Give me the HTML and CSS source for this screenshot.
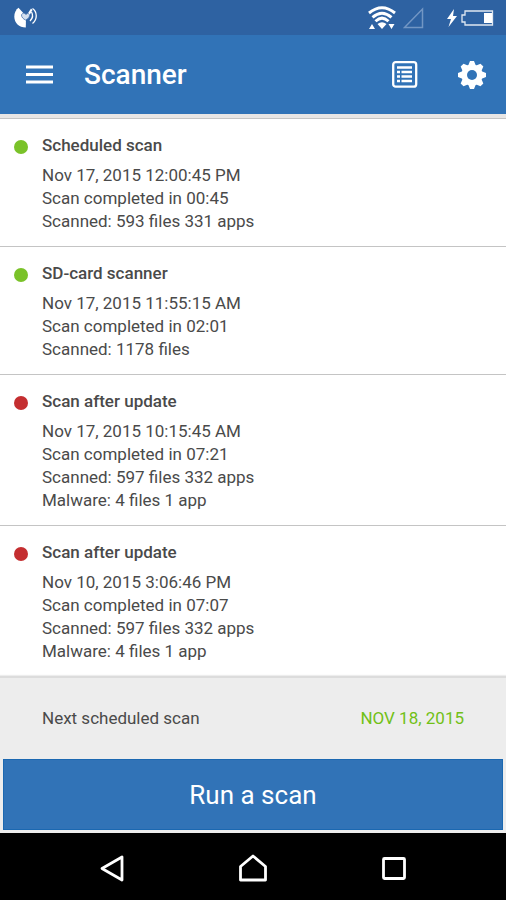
FILE: index.html
```html
<!DOCTYPE html>
<html lang="en">
<head>
<meta charset="utf-8">
<meta name="viewport" content="width=device-width, initial-scale=1">
<title>Scanner</title>
<link rel="stylesheet" href="styles.css">
</head>
<body>
<div class="screen">
  <div class="status-bar">
    <svg class="status-app" width="24" height="22" viewBox="0 0 24 22" aria-hidden="true">
      <path d="M4.500 .8 L12 9 L11.800 20.500 C5 20.500 .3 16 .3 9.500 C.3 6 2 2.500 4.500 .8Z" fill="#fff"/>
      <path d="M12.500 8.500 L17 1.500 L18.500 3 L15 9Z" fill="#fff"/>
      <path d="M7.500 8 C8 6 10.500 5.500 12 7.500 C13.500 5.500 15.500 6.500 15.500 8.500 C15.500 11 13.500 12 11.500 13 C9.500 12 7.500 10.500 7.500 8Z" fill="#d5e0ee" stroke="#4a76b0" stroke-width=".8"/>
      <path d="M17.500 5 C19.300 8 18.500 11.500 16 14" fill="none" stroke="#fff" stroke-width="1.300"/>
      <path d="M18.500 1.500 C23.500 5 23.500 12.500 18.500 16.500" fill="none" stroke="#fff" stroke-width="1.300"/>
    </svg>
    <div class="status-icons">
      <svg width="28" height="24" viewBox="0 0 28 24" aria-hidden="true">
        <g fill="none" stroke="#fff" stroke-width="2.900">
          <path d="M1 7 Q14 -3.500 27 7"/>
          <path d="M4.500 11.300 Q14 3 23.500 11.300"/>
          <path d="M7.500 15.300 Q14 9 20.500 15.300"/>
        </g>
        <path d="M9.500 18 Q14 14.500 18.500 18 L14 23Z M1 23 L4 18 L7 23Z M20.500 18 H26.500 L23.500 23Z" fill="#fff"/>
      </svg>
      <svg class="signal" width="21" height="22" viewBox="0 0 21 22" aria-hidden="true">
        <path d="M1.500 20.500 H19.500 V2Z" fill="none" stroke="#7296c4" stroke-width="1.500"/>
      </svg>
      <svg class="bolt" width="12" height="18" viewBox="0 0 12 18" aria-hidden="true">
        <path d="M8 0 L1 10 H5 L2.500 18 L11 7 H7Z" fill="#fff"/>
      </svg>
      <svg width="33" height="16" viewBox="0 0 33 16" aria-hidden="true">
        <path d="M4 1 H31.500 V15 H4 V12 H1 V5 H4Z" fill="none" stroke="#fff" stroke-opacity=".85" stroke-width="1.300"/>
        <path d="M23 3 H31 V13 H23Z" fill="#fff"/>
      </svg>
    </div>
  </div>

  <header class="app-bar">
    <button class="icon-button" type="button" aria-label="Menu">
      <svg width="28" height="28" viewBox="0 0 28 28" aria-hidden="true">
        <path d="M0 6 H27 M0 13.500 H27 M0 21 H27" stroke="#fff" stroke-width="2.800"/>
      </svg>
    </button>
    <h1 class="app-title">Scanner</h1>
    <button class="icon-button log-button" type="button" aria-label="Scan log">
      <svg width="26" height="28" viewBox="0 0 26 28" aria-hidden="true">
        <rect x="1.200" y="1.200" width="23" height="24.500" rx="2.500" fill="none" stroke="#fff" stroke-width="2.300"/>
        <path d="M5 6.500 H20 M9.500 11 H20 M9.500 15.500 H20 M9.500 20 H20" stroke="#fff" stroke-width="2.300"/>
        <path d="M5 11 H8 M5 15.500 H8 M5 20 H8" stroke="#fff" stroke-width="2.500"/>
      </svg>
    </button>
    <button class="icon-button" type="button" aria-label="Settings">
      <svg width="28" height="28" viewBox="0 0 28 28" aria-hidden="true">
        <g fill="#fff">
          <path d="M12 0 H16 L18 5 V23 L16 28 H12 L10 23 V5Z"/>
          <path d="M12 0 H16 L18 5 V23 L16 28 H12 L10 23 V5Z" transform="rotate(45 14 14)"/>
          <path d="M12 0 H16 L18 5 V23 L16 28 H12 L10 23 V5Z" transform="rotate(90 14 14)"/>
          <path d="M12 0 H16 L18 5 V23 L16 28 H12 L10 23 V5Z" transform="rotate(135 14 14)"/>
          <circle cx="14" cy="14" r="10.500"/>
        </g>
        <circle cx="14" cy="14" r="5" fill="#3173b7"/>
      </svg>
    </button>
  </header>

  <main class="log">
    <article class="entry">
      <span class="dot dot-ok"></span>
      <div>
        <h2 class="entry-title">Scheduled scan</h2>
        <p>Nov 17, 2015 12:00:45 PM</p>
        <p>Scan completed in 00:45</p>
        <p>Scanned: 593 files 331 apps</p>
      </div>
    </article>
    <article class="entry">
      <span class="dot dot-ok"></span>
      <div>
        <h2 class="entry-title">SD-card scanner</h2>
        <p>Nov 17, 2015 11:55:15 AM</p>
        <p>Scan completed in 02:01</p>
        <p>Scanned: 1178 files</p>
      </div>
    </article>
    <article class="entry">
      <span class="dot dot-alert"></span>
      <div>
        <h2 class="entry-title">Scan after update</h2>
        <p>Nov 17, 2015 10:15:45 AM</p>
        <p>Scan completed in 07:21</p>
        <p>Scanned: 597 files 332 apps</p>
        <p>Malware: 4 files 1 app</p>
      </div>
    </article>
    <article class="entry">
      <span class="dot dot-alert"></span>
      <div>
        <h2 class="entry-title">Scan after update</h2>
        <p>Nov 10, 2015 3:06:46 PM</p>
        <p>Scan completed in 07:07</p>
        <p>Scanned: 597 files 332 apps</p>
        <p>Malware: 4 files 1 app</p>
      </div>
    </article>
  </main>

  <footer class="actions">
    <div class="next-scan">
      <span>Next scheduled scan</span>
      <a class="next-date" href="#">NOV 18, 2015</a>
    </div>
    <button class="run-button" type="button">Run a scan</button>
  </footer>

  <nav class="nav-bar" aria-label="System">
    <button class="icon-button" type="button" aria-label="Back">
      <svg width="28" height="30" viewBox="0 0 28 30" aria-hidden="true">
        <path d="M4 14.500 L24 3 V26Z" fill="none" stroke="#fff" stroke-width="2.800" stroke-linejoin="round"/>
      </svg>
    </button>
    <button class="icon-button" type="button" aria-label="Home">
      <svg width="28" height="30" viewBox="0 0 28 30" aria-hidden="true">
        <path d="M1.500 26 V12.500 L14 2 L26.500 12.500 V26Z" fill="none" stroke="#fff" stroke-width="2.800" stroke-linejoin="round"/>
      </svg>
    </button>
    <button class="icon-button" type="button" aria-label="Recent apps">
      <svg width="28" height="30" viewBox="0 0 28 30" aria-hidden="true">
        <rect x="3.500" y="4.500" width="21" height="20" rx="1" fill="none" stroke="#fff" stroke-width="2.800"/>
      </svg>
    </button>
  </nav>
</div>
</body>
</html>
```
FILE: styles.css
```css
* {
  box-sizing: border-box;
}

body {
  margin: 0;
  font-family: Roboto, "Liberation Sans", sans-serif;
  font-size: 17px;
  line-height: 23px;
  color: #4a4a4a;
  background: #000;
}

h1,
h2,
p {
  margin: 0;
}

button {
  font: inherit;
  border: 0;
  padding: 0;
  cursor: pointer;
}

svg {
  display: block;
}

.screen {
  display: flex;
  flex-direction: column;
  min-height: 100vh;
  background: #fff;
}

.status-bar {
  display: flex;
  align-items: center;
  justify-content: space-between;
  height: 35px;
  padding: 0 12px 0 14px;
  background: #2e62a2;
}

.status-icons {
  display: flex;
  align-items: center;
}

.signal {
  margin-left: 7px;
}

.bolt {
  margin: 0 3px 0 22px;
}

.app-bar {
  display: flex;
  align-items: center;
  height: 79px;
  padding: 0 20px 0 26px;
  background: #3173b7;
}

.icon-button {
  display: block;
  background: none;
}

.app-title {
  flex: 1;
  margin-left: 30px;
  font-size: 28px;
  font-weight: 500;
  line-height: 32px;
  color: #fff;
}

.log-button {
  margin-right: 40px;
}

.log {
  flex: 1;
  margin-top: 4px;
  border-top: 1px solid #c4c4c4;
  box-shadow: 0 -4px 0 #e8e6e5;
}

.entry {
  display: flex;
  padding: 15px 14px 13px;
  border-bottom: 1px solid #c4c4c4;
}

.entry:last-child {
  border-bottom: 0;
}

.entry-title {
  margin-bottom: 7px;
  font-size: 17px;
  font-weight: 500;
  line-height: 23px;
}

.dot {
  width: 14px;
  height: 14px;
  margin: 6px 14px 0 0;
  border-radius: 50%;
}

.dot-ok {
  background: #7ac229;
}

.dot-alert {
  background: #c42e30;
}

.actions {
  padding: 0 3px 3px;
  background: #ededed;
  border-top: 2px solid #dcdcdc;
  box-shadow: 0 -1px 1px #ededed;
}

.next-scan {
  display: flex;
  align-items: center;
  justify-content: space-between;
  height: 81px;
  padding: 0 39px;
}

.next-date {
  color: #71c016;
  text-decoration: none;
}

.run-button {
  display: block;
  width: 100%;
  height: 71px;
  padding-top: 2px;
  font-size: 26px;
  color: #fff;
  background: #3173b7;
  border: 1px solid #1b68b1;
}

.nav-bar {
  display: flex;
  align-items: center;
  justify-content: space-around;
  height: 67px;
  padding: 4px 42px 0;
  background: #000;
}
```
